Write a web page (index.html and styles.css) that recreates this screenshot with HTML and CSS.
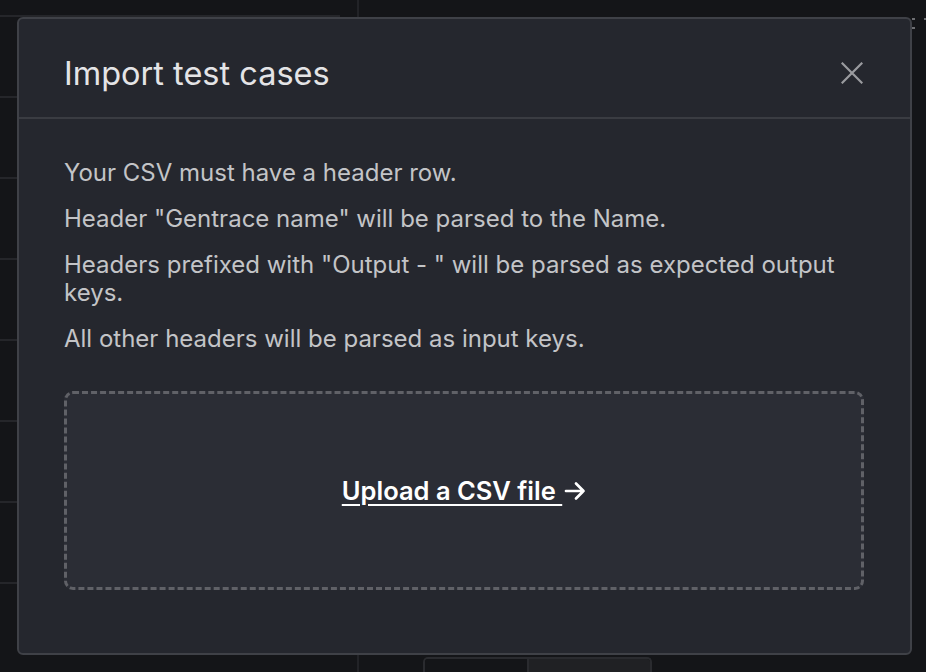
FILE: index.html
```html
<!DOCTYPE html>
<html lang="en">
<head>
<meta charset="utf-8">
<title>Import test cases</title>
<link rel="stylesheet" href="styles.css">
</head>
<body>
<div class="page">
  <aside class="sidebar">
    <div class="row"></div>
    <div class="row"></div>
    <div class="row"></div>
    <div class="row"></div>
    <div class="row"></div>
    <div class="row"></div>
    <div class="row"></div>
    <div class="row"></div>
  </aside>
  <main class="main">
    <div class="main-top">
      <span class="dots"><i></i><i></i></span><span class="dot-t"></span>
    </div>
    <div class="segmented">
      <span class="seg seg-a"></span><span class="seg seg-b"></span>
    </div>
  </main>
</div>

<div class="modal" role="dialog" aria-labelledby="modal-title">
  <header class="modal-header">
    <h2 id="modal-title" class="modal-title">Import test cases</h2>
    <button class="close" aria-label="Close">
      <svg width="22" height="22" viewBox="0 0 22 22" fill="none" stroke="currentColor" stroke-width="2.2" stroke-linecap="square">
        <path d="M1.5 1.5 L20.5 20.5 M20.5 1.5 L1.5 20.5"/>
      </svg>
    </button>
  </header>
  <section class="modal-body">
    <p class="note">Your CSV must have a header row.</p>
    <p class="note">Header "Gentrace name" will be parsed to the Name.</p>
    <p class="note">Headers prefixed with "Output - " will be parsed as expected output keys.</p>
    <p class="note">All other headers will be parsed as input keys.</p>
    <div class="dropzone">
      <a class="upload" href="#"><span class="upload-text">Upload a CSV file </span><svg class="arrow" width="22" height="20" viewBox="0 0 22 20" fill="none" stroke="currentColor" stroke-width="2.7" stroke-linecap="round" stroke-linejoin="round"><path d="M2 10 H19.5 M12 2.5 L19.5 10 L12 17.5"/></svg></a>
    </div>
  </section>
</div>
</body>
</html>
```
FILE: styles.css
```css
* { box-sizing: border-box; }
html, body { margin: 0; padding: 0; }
body {
  background: #141518;
  font-family: Inter, "Noto Sans", "Liberation Sans", sans-serif;
  width: 926px;
  height: 672px;
  overflow: hidden;
}
.page {
  display: flex;
  height: 672px;
}
.sidebar {
  width: 340px;
  padding-top: 15px;
  margin-right: 17px;
}
.row {
  height: 81px;
  border-top: 2px solid #25262a;
}
.row:last-child { height: 20px; }
.main {
  flex: 1;
  border-left: 2px solid #222327;
  display: flex;
  flex-direction: column;
  justify-content: space-between;
}
.main-top {
  display: flex;
  justify-content: flex-end;
  gap: 9px;
  padding-top: 18px;
  padding-right: 0;
}
.dots { display: flex; flex-direction: column; gap: 7px; }
.dots i { display: block; width: 3px; height: 2px; background: #6d6e72; }
.dot-t { display: block; width: 2px; height: 2px; background: #6d6e72; }
.segmented {
  display: flex;
  margin-left: 64px;
  width: 229px;
  height: 15px;
  border: 2px solid #2a2b2f;
  border-bottom: none;
  border-radius: 5px 5px 0 0;
  overflow: hidden;
}
.seg-a { width: 104px; background: #141518; border-right: 2px solid #2a2b2f; }
.seg-b { flex: 1; background: #202124; }

.modal {
  position: absolute;
  left: 17px;
  top: 17px;
  width: 895px;
  height: 638px;
  background: #25272e;
  border: 2px solid #3f4147;
  border-radius: 6px;
  display: flex;
  flex-direction: column;
}
.modal-header {
  height: 100px;
  display: flex;
  align-items: center;
  justify-content: space-between;
  padding: 10px 47px 0 45px;
  border-bottom: 2px solid #3a3c42;
}
.modal-title {
  margin: 0;
  font-size: 32.5px;
  font-weight: 400;
  color: #e4e4e6;
}
.close {
  background: none;
  border: none;
  padding: 0;
  color: #9a9b9f;
  display: flex;
  cursor: pointer;
}
.modal-body {
  padding: 40px 46px 0 45px;
}
.note {
  margin: 0 0 18px;
  font-size: 24px;
  line-height: 28px;
  color: #c3c4c7;
}
.dropzone {
  margin-top: 38px;
  height: 199px;
  border: 3px dashed #606167;
  border-radius: 9px;
  background: #2b2d35;
  display: flex;
  align-items: center;
  justify-content: center;
}
.upload {
  display: flex;
  align-items: center;
  color: #ffffff;
  font-size: 25.5px;
  font-weight: 600;
  text-decoration: none;
}
.upload-text {
  text-decoration: underline;
  text-decoration-thickness: 2px;
  text-underline-offset: 4px;
  white-space: pre;
}
.arrow { margin-left: 2px; }
```
